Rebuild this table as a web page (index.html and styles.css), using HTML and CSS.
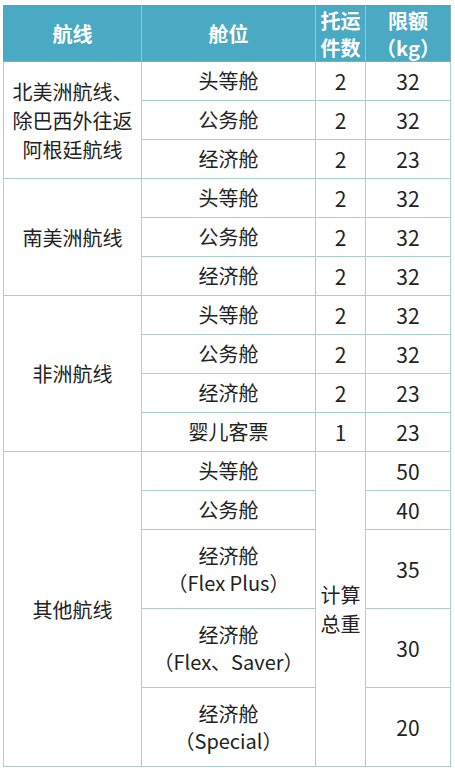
FILE: index.html
```html
<!DOCTYPE html>
<html lang="zh">
<head>
<meta charset="utf-8">
<link rel="stylesheet" href="styles.css">
</head>
<body>
<table class="bag">
  <colgroup>
    <col class="c1"><col class="c2"><col class="c3"><col class="c4">
  </colgroup>
  <thead>
    <tr class="head">
      <th>航线</th>
      <th>舱位</th>
      <th class="two">托运<br>件数</th>
      <th class="two">限额<br>（kg）</th>
    </tr>
  </thead>
  <tbody>
    <tr class="r"><td rowspan="3" class="route">北美洲航线、<br>除巴西外往返<br>阿根廷航线</td><td>头等舱</td><td class="num">2</td><td class="num">32</td></tr>
    <tr class="r"><td>公务舱</td><td class="num">2</td><td class="num">32</td></tr>
    <tr class="r"><td>经济舱</td><td class="num">2</td><td class="num">23</td></tr>

    <tr class="r"><td rowspan="3" class="route">南美洲航线</td><td>头等舱</td><td class="num">2</td><td class="num">32</td></tr>
    <tr class="r"><td>公务舱</td><td class="num">2</td><td class="num">32</td></tr>
    <tr class="r"><td>经济舱</td><td class="num">2</td><td class="num">32</td></tr>

    <tr class="r"><td rowspan="4" class="route">非洲航线</td><td>头等舱</td><td class="num">2</td><td class="num">32</td></tr>
    <tr class="r"><td>公务舱</td><td class="num">2</td><td class="num">32</td></tr>
    <tr class="r"><td>经济舱</td><td class="num">2</td><td class="num">23</td></tr>
    <tr class="r"><td>婴儿客票</td><td class="num">1</td><td class="num">23</td></tr>

    <tr class="r"><td rowspan="5" class="route">其他航线</td><td>头等舱</td><td rowspan="5" class="calc">计算<br>总重</td><td class="num">50</td></tr>
    <tr class="r"><td>公务舱</td><td class="num">40</td></tr>
    <tr class="rr"><td class="ml">经济舱<br>（Flex Plus）</td><td class="num">35</td></tr>
    <tr class="rr"><td class="ml">经济舱<br>（Flex、Saver）</td><td class="num">30</td></tr>
    <tr class="rr last"><td class="ml">经济舱<br>（Special）</td><td class="num">20</td></tr>
  </tbody>
</table>
</body>
</html>
```

FILE: styles.css
```css
html, body {
  margin: 0;
  padding: 0;
  background: #ffffff;
}

body {
  padding: 5px 5px 0 3px;
  font-family: "Noto Sans CJK SC", "Noto Sans", sans-serif;
  color: #222222;
}

.bag {
  border-collapse: collapse;
  table-layout: fixed;
  width: 447px;
  border: 1px solid #86adae;
}

.c1 { width: 138px; }
.c2 { width: 174px; }
.c3 { width: 50px; }
.c4 { width: 85px; }

.head {
  height: 56px;
}

.head th {
  background: #4aa9c3;
  color: #ffffff;
  font-size: 20px;
  font-weight: 700;
  line-height: 26px;
  padding: 0;
  text-align: center;
  vertical-align: middle;
  border-left: 1px solid #86cddb;
  border-top: 1px solid #4aa9c3;
  border-bottom: 1px solid #86adae;
}

.head th:first-child {
  border-left: 1px solid #4aa9c3;
}

.head th.two {
  line-height: 27px;
}

td {
  border: 1px solid #a9d0cf;
  padding: 0;
  text-align: center;
  vertical-align: middle;
  font-size: 20px;
  line-height: 28px;
}

td.num {
  font-size: 21px;
}

.r {
  height: 39px;
}

.rr {
  height: 79px;
}

.route {
  line-height: 29px;
}

.ml {
  line-height: 27px;
}

.calc {
  line-height: 29px;
}
```
